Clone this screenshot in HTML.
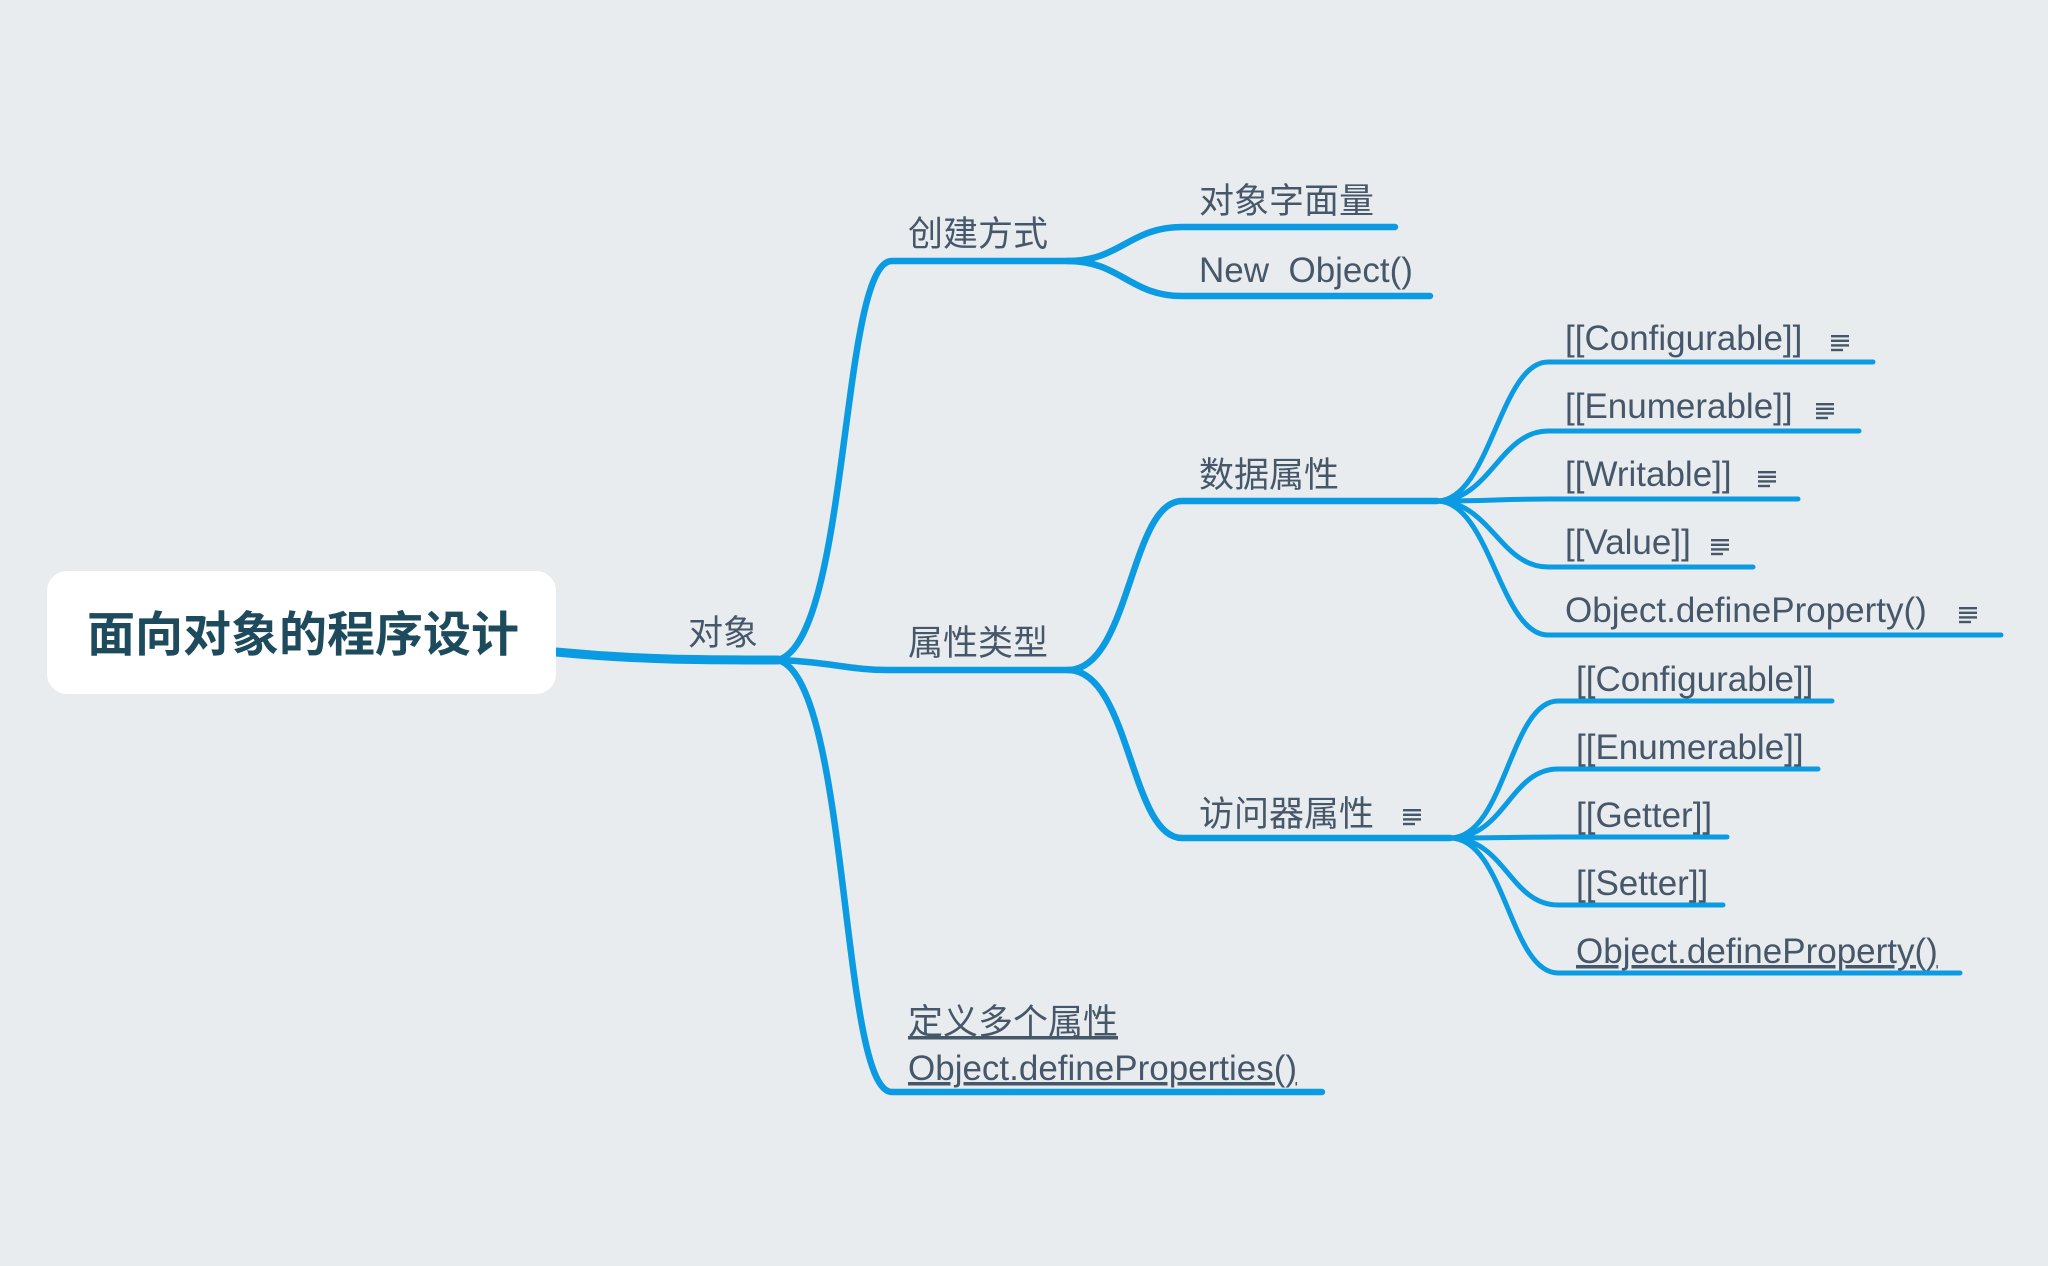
<!DOCTYPE html>
<html><head><meta charset="utf-8"><style>
html,body{margin:0;padding:0;background:#e8ecef;}
svg{display:block}
text{font-family:"Liberation Sans","Noto Sans CJK SC",sans-serif;fill:#47576a;font-size:35px}
</style></head><body>
<svg width="2048" height="1266" viewBox="0 0 2048 1266" xmlns="http://www.w3.org/2000/svg">
<defs>
<g id="note"><rect x="0" y="0" width="18" height="2.4" fill="#47576a"/><rect x="0" y="4.6" width="18" height="2.4" fill="#47576a"/><rect x="0" y="9.2" width="18" height="2.4" fill="#47576a"/><rect x="0" y="13.8" width="12" height="2.4" fill="#47576a"/></g>
</defs>
<rect width="2048" height="1266" fill="#e8ecef"/>
<g fill="none" stroke="#0b9be2" stroke-linecap="round">
<path d="M556,652 C640,660 700,660 778,660" stroke-width="9"/>
<g stroke-width="6.5">
<path d="M778,660 C850,640 840,261 892,261 L1068,261"/>
<path d="M778,660 C830,662 850,670 888,670 L1068,670"/>
<path d="M778,660 C850,680 840,1092 892,1092 L1322,1092"/>
<path d="M1068,261 C1120,261 1130,227 1182,227 L1395,227"/>
<path d="M1068,261 C1120,261 1130,296 1182,296 L1430,296"/>
<path d="M1068,670 C1130,670 1130,501 1182,501 L1437,501"/>
<path d="M1068,670 C1130,670 1130,838 1182,838 L1450,838"/>
</g>
<g stroke-width="5">
<path d="M1437,501 C1490,501 1500,362 1548,362 L1873,362"/>
<path d="M1437,501 C1490,501 1500,431 1548,431 L1859,431"/>
<path d="M1437,501 C1490,501 1500,499 1548,499 L1798,499"/>
<path d="M1437,501 C1490,501 1500,567 1548,567 L1753,567"/>
<path d="M1437,501 C1490,501 1500,635 1548,635 L2001,635"/>
<path d="M1450,838 C1505,838 1510,701 1558,701 L1832,701"/>
<path d="M1450,838 C1505,838 1510,769 1558,769 L1818,769"/>
<path d="M1450,838 C1505,838 1510,837 1558,837 L1727,837"/>
<path d="M1450,838 C1505,838 1510,905 1558,905 L1723,905"/>
<path d="M1450,838 C1505,838 1510,973 1558,973 L1960,973"/>
</g>
</g>
<rect x="47" y="571" width="509" height="123" rx="20" fill="#ffffff"/>
<text x="87" y="651" style="font-size:48px;font-weight:bold;fill:#1d4a5c">面向对象的程序设计</text>
<text x="688" y="645">对象</text>
<text x="908" y="246">创建方式</text>
<text x="908" y="655">属性类型</text>
<text x="908" y="1034" text-decoration="underline">定义多个属性</text>
<text x="908" y="1080" text-decoration="underline">Object.defineProperties()</text>
<text x="1199" y="213">对象字面量</text>
<text x="1199" y="282">New&#160; Object()</text>
<text x="1199" y="487">数据属性</text>
<text x="1199" y="826">访问器属性</text>
<use href="#note" x="1403" y="809"/>
<text x="1565" y="350">[[Configurable]]</text><use href="#note" x="1831" y="335"/>
<text x="1565" y="418">[[Enumerable]]</text><use href="#note" x="1816" y="403"/>
<text x="1565" y="486">[[Writable]]</text><use href="#note" x="1758" y="471"/>
<text x="1565" y="554">[[Value]]</text><use href="#note" x="1711" y="539"/>
<text x="1565" y="622">Object.defineProperty()</text><use href="#note" x="1959" y="607"/>
<text x="1576" y="691">[[Configurable]]</text>
<text x="1576" y="759">[[Enumerable]]</text>
<text x="1576" y="827">[[Getter]]</text>
<text x="1576" y="895">[[Setter]]</text>
<text x="1576" y="963" text-decoration="underline">Object.defineProperty()</text>
</svg>
</body></html>
